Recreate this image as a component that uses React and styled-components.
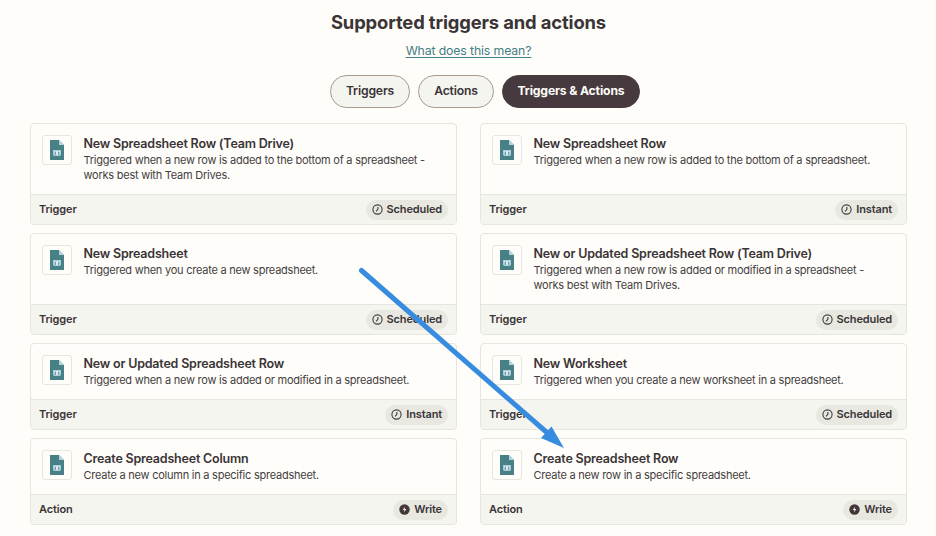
import React from "react";
import styled, { createGlobalStyle } from "styled-components";

const GlobalStyle = createGlobalStyle`
  * { box-sizing: border-box; }
  body {
    margin: 0;
    background: #fffdf9;
    color: #3a3437;
    font-family: Inter, "Liberation Sans", sans-serif;
  }
`;

const Page = styled.main`
  position: relative;
  width: 936px;
  height: 536px;
  overflow: hidden;
  padding: 11px 29px 0 30px;
`;

const Header = styled.header`
  display: flex;
  flex-direction: column;
  align-items: center;
`;

const Title = styled.h1`
  margin: 0;
  font-size: 18.4px;
  line-height: 23px;
  font-weight: 700;
  letter-spacing: -0.14px;
`;

const HelpLink = styled.a`
  margin-top: 8px;
  font-size: 12.3px;
  line-height: 17px;
  letter-spacing: -0.14px;
  color: #3f7f86;
  text-decoration: underline;
  text-underline-offset: 2px;
`;

const Tabs = styled.nav`
  display: flex;
  gap: 8px;
  margin: 16px 0 0 33px;
`;

const Tab = styled.button`
  width: ${(p) => p.$width}px;
  height: 33px;
  padding: 0 0 2px;
  border-radius: 17px;
  border: 1px solid ${(p) => (p.$active ? "#463a3e" : "#a79a8c")};
  background: ${(p) => (p.$active ? "#463a3e" : "#f5f5f0")};
  color: ${(p) => (p.$active ? "#fffdf9" : "#3a3437")};
  font: ${(p) => (p.$active ? 700 : 600)} 12.2px Inter, "Liberation Sans", sans-serif;
  letter-spacing: -0.16px;
  white-space: nowrap;
`;

const Grid = styled.section`
  display: grid;
  grid-template-columns: 427px 427px;
  gap: 8px 23px;
  margin-top: 15px;
`;

const Card = styled.article`
  display: flex;
  flex-direction: column;
  border: 1px solid #e6e5de;
  border-radius: 4px;
  overflow: hidden;
`;

const CardBody = styled.div`
  display: flex;
  flex: none;
  gap: 11px;
  padding: 11px 11px 0;
  height: ${(p) => (p.$tall ? 70 : 55)}px;
`;

const IconFrame = styled.div`
  width: 30px;
  height: 30px;
  flex: none;
  display: flex;
  align-items: center;
  justify-content: center;
  border: 1px solid #e8e5df;
  border-radius: 3px;
`;

const CardText = styled.div`
  padding: 1px 0 0 0.5px;
`;

const CardTitle = styled.h2`
  margin: 0 0 1px;
  font-size: 12.5px;
  line-height: 16px;
  font-weight: 600;
  letter-spacing: -0.2px;
  white-space: nowrap;
`;

const Description = styled.p`
  margin: 0;
  font-size: 11px;
  line-height: 15px;
  letter-spacing: -0.24px;
  white-space: pre;
  color: #443e42;
`;

const CardFooter = styled.footer`
  display: flex;
  align-items: center;
  justify-content: space-between;
  height: 30px;
  padding: 0 8px;
  border-top: 1px solid #e6e5de;
  background: #f5f5f0;
  font-size: 11px;
  font-weight: 600;
  letter-spacing: -0.13px;
`;

const FooterLabel = styled.span`
  line-height: 14px;
  padding-bottom: 1px;
`;

const Badge = styled.span`
  display: flex;
  align-items: center;
  gap: 4px;
  height: 20px;
  padding: 0 6px;
  border-radius: 10px;
  background: #e8e7e0;
`;

const Arrow = styled.svg`
  position: absolute;
  left: 0;
  top: 0;
  pointer-events: none;
`;

function SheetIcon() {
  return (
    <svg width="16" height="20" viewBox="0 0 16 20" shapeRendering="crispEdges">
      <path d="M1 0h9l5 5v15H1z" fill="#478185" />
      <path d="M10 0l5 5h-5z" fill="#b3d2da" />
      <path d="M4 10h8v6H4z" fill="#a9cddb" />
      <path d="M4 15h1v1H4zM11 15h1v1h-1zM6 12h1v3H6zM9 12h1v3H9z" fill="#6fa1aa" />
      <path d="M7 11h2v4H7zM5 11h1v1H5zM10 11h1v1h-1z" fill="#e1e9eb" />
    </svg>
  );
}

function ClockIcon() {
  return (
    <svg width="11" height="11" viewBox="0 0 11 11" fill="none" stroke="#3a3c42">
      <circle cx="5.5" cy="5.5" r="4.6" strokeWidth="1.1" />
      <path d="M5.9 2.9v2.5L4 7.4" strokeWidth="1.1" />
    </svg>
  );
}

function WriteIcon() {
  return (
    <svg width="11" height="11" viewBox="0 0 11 11">
      <circle cx="5.5" cy="5.5" r="5.2" fill="#423639" />
      <path d="M6 2.8L3.7 6h1.6L5 8.2l2.4-3.2H5.7z" fill="#eeeae6" />
    </svg>
  );
}

const items = [
  { title: "New Spreadsheet Row (Team Drive)", text: "Triggered when a new row is added to the bottom of a spreadsheet -\nworks best with Team Drives.", kind: "Trigger", mode: "Scheduled", tall: true },
  { title: "New Spreadsheet Row", text: "Triggered when a new row is added to the bottom of a spreadsheet.", kind: "Trigger", mode: "Instant", tall: true },
  { title: "New Spreadsheet", text: "Triggered when you create a new spreadsheet.", kind: "Trigger", mode: "Scheduled", tall: true },
  { title: "New or Updated Spreadsheet Row (Team Drive)", text: "Triggered when a new row is added or modified in a spreadsheet -\nworks best with Team Drives.", kind: "Trigger", mode: "Scheduled", tall: true },
  { title: "New or Updated Spreadsheet Row", text: "Triggered when a new row is added or modified in a spreadsheet.", kind: "Trigger", mode: "Instant" },
  { title: "New Worksheet", text: "Triggered when you create a new worksheet in a spreadsheet.", kind: "Trigger", mode: "Scheduled" },
  { title: "Create Spreadsheet Column", text: "Create a new column in a specific spreadsheet.", kind: "Action", mode: "Write" },
  { title: "Create Spreadsheet Row", text: "Create a new row in a specific spreadsheet.", kind: "Action", mode: "Write" },
];

export default function App() {
  return (
    <Page>
      <GlobalStyle />
      <Header>
        <Title>Supported triggers and actions</Title>
        <HelpLink>What does this mean?</HelpLink>
        <Tabs>
          <Tab $width={80}>Triggers</Tab>
          <Tab $width={76}>Actions</Tab>
          <Tab $width={138} $active>Triggers &amp; Actions</Tab>
        </Tabs>
      </Header>
      <Grid>
        {items.map((item) => (
          <Card key={item.title}>
            <CardBody $tall={item.tall}>
              <IconFrame><SheetIcon /></IconFrame>
              <CardText>
                <CardTitle>{item.title}</CardTitle>
                <Description>{item.text}</Description>
              </CardText>
            </CardBody>
            <CardFooter>
              <FooterLabel>{item.kind}</FooterLabel>
              <Badge>
                {item.mode === "Write" ? <WriteIcon /> : <ClockIcon />}
                <FooterLabel>{item.mode}</FooterLabel>
              </Badge>
            </CardFooter>
          </Card>
        ))}
      </Grid>
      <Arrow width="936" height="536" viewBox="0 0 936 536">
        <path d="M361.5 270.5L548 433.5" stroke="#388ce0" strokeWidth="5" strokeLinecap="round" />
        <path d="M564 448L541 438L551.5 426.5z" fill="#388ce0" />
      </Arrow>
    </Page>
  );
}
